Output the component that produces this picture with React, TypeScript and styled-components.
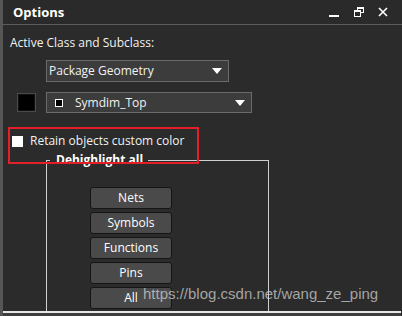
import React from "react";
import styled, { createGlobalStyle } from "styled-components";

const Global = createGlobalStyle`
  html, body { margin: 0; padding: 0; background: #2b2b2b; }
  body { font-family: "Open Sans", "Noto Sans", sans-serif; }
`;

const Panel = styled.div`
  position: relative;
  width: 402px;
  height: 316px;
  box-sizing: border-box;
  background: #2b2b2b;
  border-left: 3px solid #565656;
  display: flex;
  flex-direction: column;
  overflow: hidden;
  color: #f2f2f2;
  font-size: 12px;
`;

const TitleBar = styled.div`
  height: 24px;
  flex: none;
  display: flex;
  align-items: center;
  padding: 0 14px 0 10px;
  border-bottom: 1px solid #5c5c5c;
  background: #2a2a2a;
`;

const Title = styled.div`
  font-weight: 700;
  font-size: 13px;
  color: #ffffff;
  flex: 1;
  margin-top: -1px;
`;

const TitleButtons = styled.div`
  display: flex;
  align-items: center;
  gap: 14px;
`;

const IconSvg = styled.svg`
  display: block;
`;

const Body = styled.div`
  flex: 1;
  display: flex;
  flex-direction: column;
  padding: 10px 0 0 7px;
`;

const Label = styled.div`
  line-height: 16px;
  height: 16px;
`;

const Row = styled.div<{ $mt: number }>`
  display: flex;
  align-items: center;
  margin-top: ${(p) => p.$mt}px;
`;

const Swatch = styled.div`
  width: 17px;
  height: 17px;
  background: #000;
  border: 1px solid #4a4a4a;
  box-shadow: inset 0 0 0 1px #111;
  margin-left: 7px;
  margin-right: 10px;
`;

const Select = styled.div<{ $w: number; $h: number; $ml: number }>`
  width: ${(p) => p.$w}px;
  height: ${(p) => p.$h}px;
  margin-left: ${(p) => p.$ml}px;
  box-sizing: border-box;
  background: #3c3c3c;
  border: 1px solid #6b6b6b;
  display: flex;
  align-items: center;
  padding: 0 6px 0 2px;
  line-height: 16px;
`;

const SelectText = styled.span`
  flex: 1;
  white-space: nowrap;
`;

const Arrow = styled.span`
  width: 0;
  height: 0;
  border-left: 5px solid transparent;
  border-right: 5px solid transparent;
  border-top: 6px solid #ffffff;
`;

const MiniBox = styled.span`
  width: 6px;
  height: 6px;
  border: 1px solid #ffffff;
  background: #000;
  margin: 0 12px 0 6px;
`;

const CheckRow = styled.div`
  display: flex;
  align-items: center;
  margin-top: 20px;
  margin-left: 2px;
  line-height: 16px;
`;

const Check = styled.span`
  width: 11px;
  height: 11px;
  background: #ffffff;
  margin-right: 7px;
`;

const Group = styled.div`
  position: relative;
  margin: 11px 0 0 36px;
  width: 223px;
  height: 151px;
  box-sizing: border-box;
  border: 1px solid #cfcfcf;
  border-bottom: none;
  padding: 26px 0 0 43px;
`;

const Legend = styled.span`
  position: absolute;
  left: 3px;
  top: -9px;
  padding: 0 5px 0 6px;
  background: #2b2b2b;
  font-weight: 700;
  color: #ffffff;
  line-height: 16px;
`;

const ButtonColumn = styled.div`
  display: flex;
  flex-direction: column;
  gap: 3px;
`;

const GroupButton = styled.div`
  width: 82px;
  height: 22px;
  box-sizing: border-box;
  background: #4a4a4a;
  border: 1px solid #151515;
  border-radius: 3px;
  display: flex;
  align-items: center;
  justify-content: center;
  color: #ffffff;
  line-height: 16px;
`;

const BottomBar = styled.div`
  position: absolute;
  left: 0;
  right: 1px;
  bottom: 0;
  height: 3px;
  border-top: 2px solid #e6e6e6;
  background: #3e3e3e;
`;

const Annotation = styled.div`
  position: absolute;
  left: 5px;
  top: 127px;
  width: 191px;
  height: 37px;
  box-sizing: border-box;
  border: 2px solid #e3202a;
  pointer-events: none;
`;

const Watermark = styled.div`
  position: absolute;
  left: 140px;
  top: 285px;
  font-family: "Liberation Sans", Arial, sans-serif;
  font-size: 15px;
  color: rgba(215, 215, 215, 0.72);
  white-space: nowrap;
`;

const buttons = ["Nets", "Symbols", "Functions", "Pins", "All"];

export default function App() {
  return (
    <>
      <Global />
      <Panel>
        <TitleBar>
          <Title>Options</Title>
          <TitleButtons>
            <IconSvg width="11" height="10" viewBox="0 0 11 10">
              <rect x="0" y="8" width="10" height="2" fill="#fff" />
            </IconSvg>
            <IconSvg width="10" height="10" viewBox="0 0 10 10">
              <rect x="3.5" y="0.5" width="6" height="5" fill="none" stroke="#fff" />
              <rect x="3.5" y="0.5" width="6" height="1.5" fill="#fff" />
              <rect x="0.5" y="3.5" width="6" height="6" fill="#2a2a2a" stroke="#fff" />
              <rect x="0.5" y="3.5" width="6" height="1.5" fill="#fff" />
            </IconSvg>
            <IconSvg width="10" height="10" viewBox="0 0 10 10">
              <path d="M1 1 L9 9 M9 1 L1 9" stroke="#fff" strokeWidth="1.6" />
            </IconSvg>
          </TitleButtons>
        </TitleBar>
        <Body>
          <Label>Active Class and Subclass:</Label>
          <Row $mt={9}>
            <Select $w={183} $h={22} $ml={36}>
              <SelectText>Package Geometry</SelectText>
              <Arrow />
            </Select>
          </Row>
          <Row $mt={10}>
            <Swatch />
            <Select $w={206} $h={21} $ml={0}>
              <MiniBox />
              <SelectText>Symdim_Top</SelectText>
              <Arrow />
            </Select>
          </Row>
          <CheckRow>
            <Check />
            Retain objects custom color
          </CheckRow>
          <Group>
            <Legend>Dehighlight all</Legend>
            <ButtonColumn>
              {buttons.map((b) => (
                <GroupButton key={b}>{b}</GroupButton>
              ))}
            </ButtonColumn>
          </Group>
        </Body>
        <BottomBar />
        <Annotation />
        <Watermark>https://blog.csdn.net/wang_ze_ping</Watermark>
      </Panel>
    </>
  );
}
